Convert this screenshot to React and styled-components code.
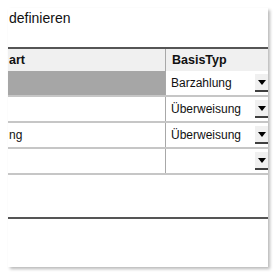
import React from 'react'
import styled, { createGlobalStyle } from 'styled-components';

const Global = createGlobalStyle`
    body{
        margin: 0;
        background: #ffffff;
        font-family: "Liberation Sans", Arial, sans-serif;
    }
`;

const rows = [
    { name: '', typ: 'Barzahlung', selected: true },
    { name: '', typ: 'Überweisung' },
    { name: 'ng', typ: 'Überweisung' },
    { name: '', typ: '' },
];

export default function App() {
    return (
        <>
            <Global />
            <Page>
                <Panel>
                    <Title>definieren</Title>
                    <Grid>
                        <HeaderRow>
                            <HeadCell>art</HeadCell>
                            <HeadCell $divider>BasisTyp</HeadCell>
                        </HeaderRow>
                        {rows.map((r, i) => (
                            <Row key={i}>
                                <NameCell $selected={r.selected}>{r.name}</NameCell>
                                <ComboCell>
                                    <ComboText>{r.typ}</ComboText>
                                    <DropButton>
                                        <svg width="8" height="5" viewBox="0 0 8 5">
                                            <path d="M0 0h8L4 5z" fill="#000" />
                                        </svg>
                                    </DropButton>
                                </ComboCell>
                            </Row>
                        ))}
                    </Grid>
                    <Footer />
                </Panel>
            </Page>
        </>
    )
}

const Page = styled.div`
    width: 277px;
    height: 277px;
    padding: 8px 0 0 8px;
    box-sizing: border-box;
`;

const Panel = styled.div`
    width: 260px;
    height: 259px;
    background: #ffffff;
    box-shadow: 2px 2px 3px rgba(0, 0, 0, 0.28);
    display: flex;
    flex-direction: column;
    overflow: hidden;
`;

const Title = styled.div`
    height: 39px;
    box-sizing: border-box;
    padding: 2px 0 0 1px;
    font-size: 14px;
    color: #111111;
`;

const Grid = styled.div`
    border-top: 2px solid #555555;
    display: flex;
    flex-direction: column;
`;

const HeaderRow = styled.div`
    display: grid;
    grid-template-columns: 157px 103px;
    height: 22px;
    background: #f0f0f0;
`;

const HeadCell = styled.div`
    display: flex;
    align-items: center;
    padding-left: ${({ $divider }) => ($divider ? '6px' : '1px')};
    border-left: ${({ $divider }) => ($divider ? '1px solid #a8a8a8' : 'none')};
    font-size: 12.5px;
    font-weight: bold;
    color: #111111;
`;

const Row = styled.div`
    display: grid;
    grid-template-columns: 157px 103px;
    height: 26px;
    box-sizing: border-box;
    border-bottom: 2px solid #c6c6c6;
`;

const NameCell = styled.div`
    display: flex;
    align-items: center;
    padding-left: 1px;
    background: ${({ $selected }) => ($selected ? '#a6a6a6' : '#ffffff')};
    font-size: 12px;
    color: #111111;
`;

const ComboCell = styled.div`
    display: flex;
    align-items: center;
    border-left: 1px solid #a8a8a8;
    padding-left: 5px;
    background: #ffffff;
`;

const ComboText = styled.span`
    flex: 1;
    font-size: 12px;
    color: #111111;
`;

const DropButton = styled.div`
    width: 15px;
    height: 18px;
    margin-right: -2px;
    box-sizing: border-box;
    background: #f0f0f0;
    border-bottom: 2px solid #404040;
    border-right: 1px solid #808080;
    display: flex;
    align-items: center;
    justify-content: center;
`;

const Footer = styled.div`
    margin-top: 42px;
    border-top: 2px solid #555555;
    flex: 1;
`;
